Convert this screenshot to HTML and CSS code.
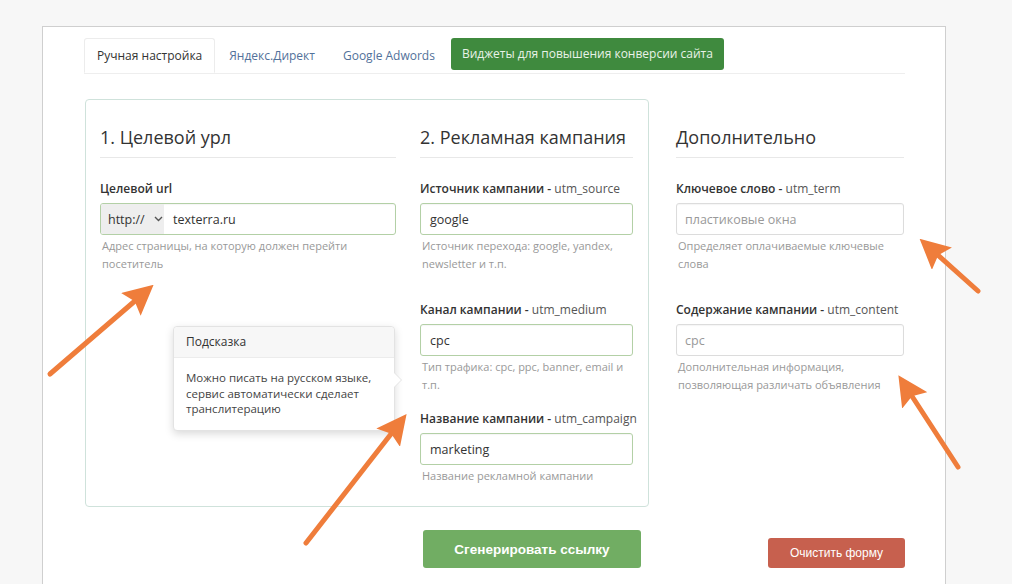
FILE: index.html
```html
<!DOCTYPE html>
<html lang="ru">
<head>
<meta charset="utf-8">
<title>UTM</title>
<link rel="stylesheet" href="styles.css">
</head>
<body>
<div class="card">
  <ul class="tabs">
    <li class="tab active">Ручная настройка</li>
    <li class="tab link">Яндекс.Директ</li>
    <li class="tab link">Google Adwords</li>
    <li class="tab-btn">Виджеты для повышения конверсии сайта</li>
  </ul>

  <div class="main">
    <div class="panel">
      <div class="col col1">
        <h2 class="heading">1. Целевой урл</h2>
        <div class="fg">
          <div class="label"><b>Целевой url</b></div>
          <div class="field success group">
            <span class="sel">http://
              <svg class="chev" width="9" height="6" viewBox="0 0 9 6"><path d="M1 1l3.5 3.5L8 1" fill="none" stroke="#555" stroke-width="1.4"/></svg>
            </span>
            <span class="val">texterra.ru</span>
          </div>
          <p class="help">Адрес страницы, на которую должен перейти посетитель</p>
        </div>
      </div>

      <div class="col col2">
        <h2 class="heading">2. Рекламная кампания</h2>
        <div class="fg fg-first">
          <div class="label"><b>Источник кампании - </b>utm_source</div>
          <div class="field success"><span class="val">google</span></div>
          <p class="help">Источник перехода: google, yandex, newsletter и т.п.</p>
        </div>
        <div class="fg">
          <div class="label"><b>Канал кампании - </b>utm_medium</div>
          <div class="field success"><span class="val">cpc</span></div>
          <p class="help">Тип трафика: cpc, ppc, banner, email и т.п.</p>
        </div>
        <div class="fg">
          <div class="label"><b>Название кампании - </b>utm_campaign</div>
          <div class="field success"><span class="val">marketing</span></div>
          <p class="help">Название рекламной кампании</p>
        </div>
      </div>

      <div class="popover">
        <div class="pop-title">Подсказка</div>
        <div class="pop-body">Можно писать на русском языке, сервис автоматически сделает транслитерацию</div>
      </div>
    </div>

    <div class="col col3">
      <h2 class="heading">Дополнительно</h2>
      <div class="fg fg-first">
        <div class="label"><b>Ключевое слово - </b>utm_term</div>
        <div class="field"><span class="val ph">пластиковые окна</span></div>
        <p class="help">Определяет оплачиваемые ключевые слова</p>
      </div>
      <div class="fg">
        <div class="label"><b>Содержание кампании - </b>utm_content</div>
        <div class="field"><span class="val ph">cpc</span></div>
        <p class="help">Дополнительная информация, позволяющая различать объявления</p>
      </div>
    </div>
  </div>

  <div class="actions">
    <button class="btn btn-go">Сгенерировать ссылку</button>
    <button class="btn btn-clear">Очистить форму</button>
  </div>
</div>

<svg class="arrows" width="1012" height="584" viewBox="0 0 1012 584">
  <defs>
    <marker id="head" markerWidth="6" markerHeight="6" refX="3.2" refY="3" orient="auto" markerUnits="strokeWidth">
      <path d="M0 0 L6 3 L0 6 L1 3 Z" fill="#ef7d3b"/>
    </marker>
  </defs>
  <g stroke="#ef7d3b" stroke-width="5" stroke-linecap="round" fill="none">
    <line x1="50" y1="374" x2="143" y2="294" marker-end="url(#head)"/>
    <line x1="306" y1="543" x2="398" y2="425" marker-end="url(#head)"/>
    <line x1="978" y1="291" x2="930" y2="248" marker-end="url(#head)"/>
    <line x1="958" y1="467" x2="906" y2="387" marker-end="url(#head)"/>
  </g>
</svg>
</body>
</html>
```
FILE: styles.css
```css
* { box-sizing: border-box; }
html, body { margin: 0; padding: 0; }
body {
  background: #f7f7f7;
  font-family: "Open Sans", "Noto Sans", sans-serif;
  color: #333;
  width: 1012px;
  height: 584px;
  overflow: hidden;
  position: relative;
}
.card {
  margin: 26px 0 0 42px;
  width: 904px;
  height: 570px;
  background: #fff;
  border: 1px solid #cfcfcf;
  border-bottom: none;
  padding: 11px 40px 0 41px;
}
.tabs {
  list-style: none;
  margin: 0;
  padding: 0;
  display: flex;
  align-items: flex-start;
  height: 36px;
  border-bottom: 1px solid #eee;
}
.tab {
  height: 35px;
  line-height: 33px;
  padding: 0 12px;
  font-size: 12px;
  border: 1px solid transparent;
  border-radius: 3px 3px 0 0;
}
.tab.active {
  border-color: #ececec #ececec #fff;
  background: #fff;
  color: #333;
}
.tab.link { color: #52719a; padding: 0 13px; }
.tab-btn {
  margin-left: 2px;
  height: 32px;
  line-height: 32px;
  padding: 0 11px;
  background: #3f8a3e;
  color: #e9f2e8;
  font-size: 12px;
  border-radius: 3px;
}
.main {
  display: flex;
  align-items: flex-start;
  margin-top: 25px;
}
.panel {
  position: relative;
  margin-left: 1px;
  width: 564px;
  height: 408px;
  border: 1px solid #cfe2db;
  border-radius: 4px;
  padding: 23px 15px 0 14px;
  display: flex;
  gap: 24px;
}
.col1 { width: 296px; }
.col2 { width: 213px; }
.col3 { width: 228px; margin-left: 27px; padding-top: 24px; }
.heading {
  margin: 0;
  font-size: 18px;
  font-weight: 400;
  line-height: 28px;
  color: #333;
  white-space: nowrap;
  padding-bottom: 6px;
  border-bottom: 1px solid #e8e8e8;
  margin-bottom: 22px;
}
.fg { margin-bottom: 16px; }
.fg-first { margin-bottom: 28px; }
.label {
  font-size: 12px;
  line-height: 18px;
  color: #555;
  margin-bottom: 5px;
  white-space: nowrap;
}
.label b { color: #333; font-weight: 600; }
.field {
  height: 32px;
  border: 1px solid #dcdcdc;
  border-radius: 3px;
  display: flex;
  align-items: center;
  overflow: hidden;
  box-shadow: inset 0 1px 1px rgba(0,0,0,0.04);
}
.field.success { border-color: #b3d0a6; }
.sel {
  height: 100%;
  width: 63px;
  background: #eeeeee;
  display: flex;
  align-items: center;
  padding-left: 7px;
  font-size: 12.5px;
  color: #333;
  gap: 7px;
}
.chev { margin-left: 2px; }
.val {
  padding-left: 9px;
  font-size: 12.5px;
  color: #333;
}
.val.ph { color: #999; padding-left: 8px; }
.help {
  margin: 2px 0 0;
  padding-left: 2px;
  font-size: 11px;
  line-height: 18px;
  color: #999;
}
.popover {
  position: absolute;
  left: 87px;
  top: 226px;
  width: 222px;
  background: #fff;
  border: 1px solid #e3e3e3;
  border-radius: 4px;
  box-shadow: 0 3px 8px rgba(0,0,0,0.15);
}
.popover::before {
  content: "";
  position: absolute;
  right: -8px;
  top: 45px;
  border: 8px solid transparent;
  border-right: none;
  border-left-color: #e3e3e3;
}
.popover::after {
  content: "";
  position: absolute;
  right: -7px;
  top: 46px;
  border: 7px solid transparent;
  border-right: none;
  border-left-color: #fff;
}
.pop-title {
  background: #f7f7f7;
  border-bottom: 1px solid #ececec;
  height: 31px;
  line-height: 30px;
  padding: 0 12px;
  font-size: 12px;
  color: #333;
  border-radius: 4px 4px 0 0;
}
.pop-body {
  padding: 12px 12px 13px;
  font-size: 11.5px;
  line-height: 15.5px;
  color: #444;
}
.actions {
  display: flex;
  align-items: flex-end;
  margin-top: 23px;
  padding-left: 339px;
}
.btn {
  border: none;
  color: #fff;
  font-family: "Liberation Sans", Arial, sans-serif;
  border-radius: 3px;
  cursor: pointer;
}
.btn-go {
  width: 218px;
  height: 38px;
  background: #71ad63;
  font-size: 13.5px;
  font-weight: 700;
}
.btn-clear {
  margin-left: 127px;
  width: 137px;
  height: 30px;
  background: #c7604e;
  font-size: 12px;
}
.arrows {
  position: absolute;
  left: 0;
  top: 0;
  pointer-events: none;
}
```
